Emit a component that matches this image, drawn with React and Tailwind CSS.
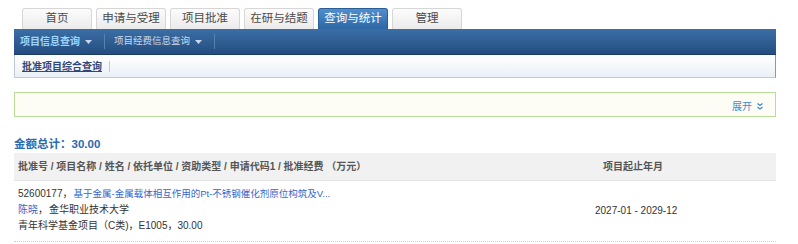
const tabs = ['首页', '申请与受理', '项目批准', '在研与结题', '查询与统计', '管理'];

const Caret = ({ className }) => (
    <svg width="7" height="4" viewBox="0 0 7 4" className={className}>
        <path d="M0 0h7L3.5 4z" fill="currentColor" />
    </svg>
);

const App = () => (
    <div
        className="w-[798px] h-[244px] bg-white overflow-hidden text-[10px] text-[#333]"
        style={{ fontFamily: '"Liberation Sans", Arial, "Noto Sans CJK SC", sans-serif' }}
    >
        <div className="px-[14px] pt-[8px] w-[776px] box-content">
            {/* top tabs */}
            <div className="flex gap-[4px] pl-[8px] h-[21px]">
                {tabs.map(t => (
                    <div
                        key={t}
                        className={
                            t === '查询与统计'
                                ? 'w-[70px] h-[21px] flex items-center justify-center rounded-t-[3px] border border-b-0 border-[#2a5e96] bg-gradient-to-b from-[#4f8fcf] to-[#2d67a4] text-white text-[11.5px]'
                                : 'w-[70px] h-[21px] flex items-center justify-center rounded-t-[3px] border border-b-0 border-[#d6d6d6] bg-gradient-to-b from-[#fcfcfc] to-[#ebebeb] text-[#4a4a4a] text-[11.5px]'
                        }
                    >
                        {t}
                    </div>
                ))}
            </div>
            {/* blue menu bar */}
            <div className="h-[26px] w-[762px] flex items-center bg-gradient-to-b from-[#3b6fa6] to-[#244d80] border-b border-[#1b3b63]">
                <div className="flex items-center gap-[5px] pl-[6px] pr-[12px] font-bold text-[#9fd6ff]">
                    项目信息查询
                    <Caret className="text-[#c9d8e8]" />
                </div>
                <div className="w-px h-[15px] bg-[#1d3f68] border-r border-[#5582b3]" />
                <div className="flex items-center gap-[5px] pl-[9px] pr-[12px] text-[#cddbeb] text-[9.5px]">
                    项目经费信息查询
                    <Caret className="text-[#c9d8e8]" />
                </div>
                <div className="w-px h-[15px] bg-[#1d3f68] border-r border-[#5582b3]" />
            </div>
            {/* sub bar */}
            <div className="h-[23px] w-[762px] flex items-center border-x border-b border-[#c3c9d3] border-r-[#8d97a8] bg-gradient-to-b from-white to-[#eaf0f7] pl-[7px]">
                <span className="font-bold underline text-[#2f477a]">批准项目综合查询</span>
                <span className="ml-[7px] w-px h-[11px] bg-[#c8c8c8]" />
            </div>
            {/* filter panel */}
            <div className="mt-[14px] h-[25px] w-[762px] border border-[#b9dc99] bg-[#fefdf5] flex items-end justify-end pr-[12px] pb-[2px]">
                <span className="text-[#3d8bd1] flex items-center gap-[5px]">
                    展开
                    <svg width="6" height="7" viewBox="0 0 6 7">
                        <path d="M0.5 0.5L3 2.5L5.5 0.5M0.5 4L3 6L5.5 4" fill="none" stroke="#3d8bd1" strokeWidth="1.3" />
                    </svg>
                </span>
            </div>
            {/* total */}
            <div className="mt-[18px] font-bold text-[#2a6aae] text-[11.5px] leading-[18px]">
                金额总计：30.00
            </div>
            {/* table */}
            <div className="w-[762px]">
                <div className="h-[28px] bg-[#f1f1f1] flex items-center font-bold text-[#555] border-b border-[#e4e4e4]">
                    <div className="pl-[4px] w-[589px]">批准号 / 项目名称 / 姓名 / 依托单位 / 资助类型 / 申请代码1 / 批准经费 （万元）</div>
                    <div>项目起止年月</div>
                </div>
                <div className="flex border-b border-dotted border-[#cfcfcf] pt-[5px] pb-[7px]">
                    <div className="pl-[4px] w-[581px] leading-[16px]">
                        <div>
                            52600177，
                            <span className="ml-[1px] text-[#3366cc] text-[9.5px]">基于金属-金属载体相互作用的Pt-不锈钢催化剂原位构筑及V...</span>
                        </div>
                        <div>
                            <span className="text-[#3366cc]">陈晓</span>，
                            <span className="ml-[1px]">金华职业技术大学</span>
                        </div>
                        <div>青年科学基金项目（C类)，E1005，30.00</div>
                    </div>
                    <div className="flex items-center">2027-01 - 2029-12</div>
                </div>
            </div>
        </div>
    </div>
);

export default App;
